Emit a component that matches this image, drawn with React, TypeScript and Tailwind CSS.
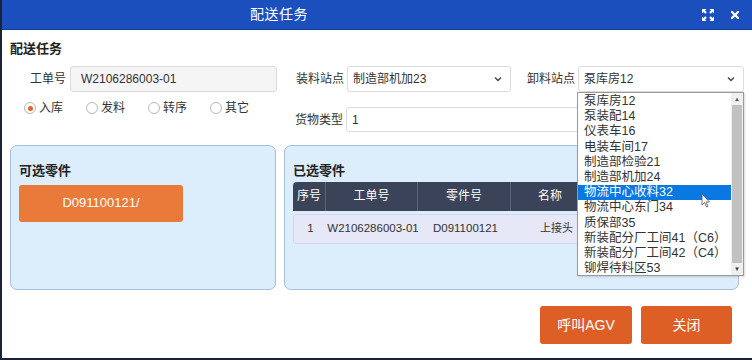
import { X } from 'lucide-react';

const stations = [
  '泵库房12',
  '泵装配14',
  '仪表车16',
  '电装车间17',
  '制造部检验21',
  '制造部机加24',
  '物流中心收料32',
  '物流中心东门34',
  '质保部35',
  '新装配分厂工间41（C6）',
  '新装配分厂工间42（C4）',
  '铆焊待料区53',
];

function Chevron() {
  return (
    <svg width="10" height="10" viewBox="0 0 10 10" className="text-[#444]">
      <path d="M2 3.5 L5 6.5 L8 3.5" fill="none" stroke="currentColor" strokeWidth="1.4" />
    </svg>
  );
}

function FullscreenIcon() {
  return (
    <svg width="12" height="12" viewBox="0 0 12 12" fill="white">
      <path d="M0 0 H4.5 L3 1.5 L4.8 3.3 L3.3 4.8 L1.5 3 L0 4.5 Z" />
      <path d="M12 0 V4.5 L10.5 3 L8.7 4.8 L7.2 3.3 L9 1.5 L7.5 0 Z" />
      <path d="M0 12 V7.5 L1.5 9 L3.3 7.2 L4.8 8.7 L3 10.5 L4.5 12 Z" />
      <path d="M12 12 H7.5 L9 10.5 L7.2 8.7 L8.7 7.2 L10.5 9 L12 7.5 Z" />
    </svg>
  );
}

function Radio({ label, checked }: { label: string; checked?: boolean }) {
  return (
    <label className="flex items-center gap-[3px] whitespace-nowrap text-[12px] text-[#333]">
      <span className="h-[12px] w-[12px] rounded-full border border-[#b8b8b8] bg-white flex items-center justify-center">
        {checked && <span className="h-[5px] w-[5px] rounded-full bg-[#e0652c]" />}
      </span>
      {label}
    </label>
  );
}

export default function App() {
  return (
    <div className="relative w-[752px] h-[360px] overflow-hidden bg-white border-l-2 border-b-2 border-[#1b2233] font-['Liberation_Sans','Noto_Sans_CJK_SC',sans-serif]">
      {/* title bar */}
      <div className="h-[30px] bg-[#1c4fbe] border-b border-[#143b8f] flex items-center text-white">
        <span className="ml-[248px] text-[14px] tracking-[0.5px]">配送任务</span>
        <div className="ml-auto mr-[11px] flex items-center gap-[15px]">
          <FullscreenIcon />
          <X className="h-[12px] w-[12px]" strokeWidth={4.5} />
        </div>
      </div>

      <div className="px-[8px]">
        <div className="pt-[9px] h-[36px] text-[13px] font-bold text-[#222]">配送任务</div>

        {/* row 1 */}
        <div className="flex items-center">
          <div className="flex items-center">
            <span className="w-[60px] whitespace-nowrap text-right pr-[4px] text-[12px] text-[#333]">工单号</span>
            <div className="h-[26px] w-[207px] rounded-[3px] border border-[#dcdcdc] bg-[#f5f5f5] px-[10px] flex items-center text-[12px] text-[#333]">
              W2106286003-01
            </div>
          </div>
          <div className="ml-[18px] flex items-center">
            <span className="w-[52px] whitespace-nowrap pr-[3px] text-right text-[12px] text-[#333]">装料站点</span>
            <div className="h-[26px] w-[164px] rounded-[3px] border border-[#dcdcdc] bg-white pl-[5px] pr-[7px] flex items-center justify-between text-[12px] text-[#333]">
              制造部机加23
              <Chevron />
            </div>
          </div>
          <div className="ml-[16px] flex items-center">
            <span className="w-[51px] whitespace-nowrap pr-[3px] text-right text-[12px] text-[#333]">卸料站点</span>
            <div className="h-[26px] w-[166px] rounded-[3px] border border-[#dcdcdc] bg-white pl-[5px] pr-[7px] flex items-center justify-between text-[12px] text-[#333]">
              泵库房12
              <Chevron />
            </div>
          </div>
        </div>

        {/* row 2 */}
        <div className="mt-[7px] flex items-start">
          <div className="w-[285px] pl-[14px] flex items-center gap-[23px]">
            <Radio label="入库" checked />
            <Radio label="发料" />
            <Radio label="转序" />
            <Radio label="其它" />
          </div>
          <div className="mt-[8px] flex items-center">
            <span className="w-[52px] whitespace-nowrap pr-[3px] text-right text-[12px] text-[#333]">货物类型</span>
            <div className="h-[25px] w-[398px] rounded-[3px] border border-[#dcdcdc] bg-white px-[5px] flex items-center text-[12px] text-[#333]">
              1
            </div>
          </div>
        </div>

        {/* panels */}
        <div className="mt-[13px] flex gap-[8px] h-[145px]">
          <div className="w-[266px] rounded-[7px] border border-[#a8bfd8] bg-[#dcedfc] px-[8px] pt-[15px]">
            <div className="text-[13px] font-bold text-[#222]">可选零件</div>
            <div className="mt-[4px] h-[37px] w-[164px] rounded-[3px] bg-[#e97a3a] flex items-center justify-center text-[13px] text-white">
              D091100121/
            </div>
          </div>
          <div className="flex-1 mr-[5px] rounded-[7px] border border-[#a8bfd8] bg-[#dcedfc] px-[8px] pt-[15px]">
            <div className="text-[13px] font-bold text-[#222]">已选零件</div>
            <div className="mt-[1px]">
              <div className="flex h-[29px] rounded-t-[4px] bg-[#3b4358] text-[12px] text-white">
                <div className="w-[33px] flex items-center justify-center border-r border-[#5a6278]">序号</div>
                <div className="w-[92px] flex items-center justify-center border-r border-[#5a6278]">工单号</div>
                <div className="w-[93px] flex items-center justify-center border-r border-[#5a6278]">零件号</div>
                <div className="flex-1 pl-[27px] flex items-center">名称</div>
              </div>
              <div className="mt-[3px] flex h-[30px] rounded-[3px] border border-[#d4d7ea] bg-[#e6e8f7] text-[11.5px] text-[#333]">
                <div className="w-[33px] flex items-center justify-center">1</div>
                <div className="w-[92px] flex items-center justify-center">W2106286003-01</div>
                <div className="w-[93px] flex items-center justify-center">D091100121</div>
                <div className="flex-1 pl-[28px] flex items-center text-[11px]">上接头</div>
              </div>
            </div>
          </div>
        </div>

        {/* buttons */}
        <div className="mt-[16px] flex justify-end gap-[9px] pr-[12px]">
          <button className="h-[38px] w-[92px] rounded-[3px] bg-[#dd5f26] text-[14px] text-white">呼叫AGV</button>
          <button className="h-[38px] w-[91px] rounded-[3px] bg-[#dd5f26] text-[14px] text-white">关闭</button>
        </div>
      </div>

      {/* open dropdown list */}
      <div className="absolute left-[575px] top-[92px] w-[167px] h-[184px] border border-[#9a9a9a] bg-white flex shadow-[1px_1px_2px_rgba(0,0,0,0.15)]">
        <div className="flex-1 pt-[1px]">
          {stations.map((s) => (
            <div
              key={s}
              className={
                s === '物流中心收料32'
                  ? 'h-[15.2px] leading-[15px] pl-[6px] whitespace-nowrap text-[12.5px] bg-[#0a78e1] text-white'
                  : 'h-[15.2px] leading-[15px] pl-[6px] whitespace-nowrap text-[12.5px] text-[#333]'
              }
            >
              {s}
            </div>
          ))}
        </div>
        <div className="w-[12px] bg-[#f0f0f0] flex flex-col items-center">
          <div className="h-[12px] flex items-center text-[6px] text-[#555]">▲</div>
          <div className="flex-1 w-[10px] bg-[#c1c1c1]" />
          <div className="h-[12px] flex items-center text-[6px] text-[#333]">▼</div>
        </div>
      </div>

      {/* mouse cursor */}
      <svg className="absolute left-[699px] top-[193px]" width="10" height="15" viewBox="0 0 10 15">
        <path d="M1 1 L1 12 L3.5 9.5 L5.5 14 L7 13.3 L5 9 L8.5 9 Z" fill="white" stroke="#555" strokeWidth="0.8" />
      </svg>
    </div>
  );
}
